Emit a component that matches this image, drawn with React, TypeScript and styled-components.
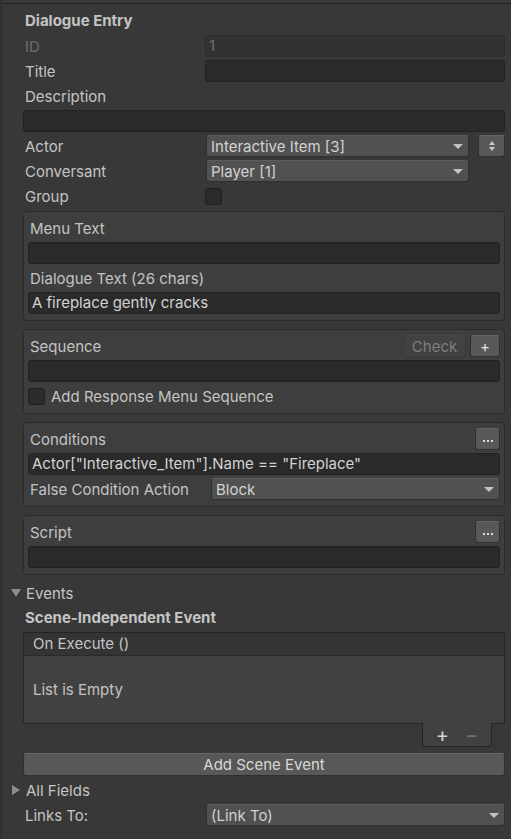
import styled, { createGlobalStyle } from "styled-components";

const GlobalStyle = createGlobalStyle`
  html, body {
    margin: 0;
    background: #383838;
  }
  body {
    font-family: Inter, "Noto Sans", sans-serif;
    font-size: 15px;
    color: #c4c4c4;
  }
`;

const Inspector = styled.div`
  width: 511px;
  height: 839px;
  box-sizing: border-box;
  background: #383838;
  border-left: 2px solid #303030;
  overflow: hidden;
`;

const TopRule = styled.div`
  height: 3px;
  border-bottom: 1px solid #232323;
`;

const Content = styled.div`
  padding: 6px 6px 0 21px;
  display: flex;
  flex-direction: column;
  gap: 3px;
`;

const Row = styled.div`
  display: flex;
  align-items: center;
  height: 22px;
  gap: 4px;
`;

const Heading = styled.div`
  height: 22px;
  line-height: 22px;
  padding-left: 2px;
  font-weight: 700;
`;

const Label = styled.div<{ $w?: number; $dim?: boolean }>`
  width: ${(p) => (p.$w ? `${p.$w - 4}px` : "auto")};
  flex-shrink: 0;
  padding-left: 2px;
  box-sizing: border-box;
  color: ${(p) => (p.$dim ? "#6c6c6c" : "#c4c4c4")};
  white-space: nowrap;
`;

const Field = styled.div<{ $disabled?: boolean }>`
  flex: 1;
  height: 22px;
  box-sizing: border-box;
  background: ${(p) => (p.$disabled ? "#323232" : "#2a2a2a")};
  border: 1px solid ${(p) => (p.$disabled ? "#2c2c2c" : "#212121")};
  border-radius: 3px;
  padding-left: 3px;
  line-height: 20px;
  color: ${(p) => (p.$disabled ? "#6c6c6c" : "#d2d2d2")};
  white-space: nowrap;
  overflow: hidden;
`;

const Popup = styled.div<{ $w?: number }>`
  ${(p) => (p.$w ? `width: ${p.$w}px; flex-shrink: 0;` : "flex: 1;")}
  height: 22px;
  box-sizing: border-box;
  background: #515151;
  border: 1px solid #303030;
  border-top-color: #5d5d5d;
  border-radius: 3px;
  padding: 0 5px 0 4px;
  display: flex;
  align-items: center;
  justify-content: space-between;
  color: #d2d2d2;
  white-space: nowrap;
  &::after {
    content: "";
    border-left: 5px solid transparent;
    border-right: 5px solid transparent;
    border-top: 5px solid #c4c4c4;
  }
`;

const Spacer = styled.div<{ $w: number }>`
  width: ${(p) => p.$w}px;
  flex-shrink: 0;
`;

const StepButton = styled.div`
  width: 27px;
  height: 22px;
  margin-left: 5px;
  box-sizing: border-box;
  background: #585858;
  border: 1px solid #303030;
  border-top-color: #656565;
  border-radius: 3px;
  display: flex;
  align-items: center;
  justify-content: center;
`;

const Checkbox = styled.div`
  width: 17px;
  height: 17px;
  box-sizing: border-box;
  background: #2b2b2b;
  border: 1px solid #1f1f1f;
  border-radius: 3px;
  flex-shrink: 0;
`;

const Box = styled.div`
  margin: 1px 0 4px;
  background: #3e3e3e;
  border: 1px solid #2b2b2b;
  border-radius: 4px;
  padding: 5px 4px 6px;
  display: flex;
  flex-direction: column;
  gap: 3px;
`;

const Grow = styled.div`
  flex: 1;
`;

const SmallButton = styled.div<{ $w: number; $disabled?: boolean }>`
  width: ${(p) => p.$w}px;
  height: 22px;
  box-sizing: border-box;
  border-radius: 3px;
  background: ${(p) => (p.$disabled ? "#424242" : "#585858")};
  border: 1px solid ${(p) => (p.$disabled ? "#3a3a3a" : "#303030")};
  border-top-color: ${(p) => (p.$disabled ? "#464646" : "#656565")};
  color: ${(p) => (p.$disabled ? "#7e7e7e" : "#e4e4e4")};
  display: flex;
  align-items: center;
  justify-content: center;
  flex-shrink: 0;
  line-height: 1;
`;

const Foldout = styled.div<{ $open?: boolean }>`
  height: 22px;
  display: flex;
  align-items: center;
  margin-left: -13px;
  gap: 5px;
  &::before {
    content: "";
    width: 0;
    height: 0;
    ${(p) =>
      p.$open
        ? `border-left: 5px solid transparent; border-right: 5px solid transparent; border-top: 8px solid #8c8c8c; margin-left: 1px;`
        : `border-top: 5px solid transparent; border-bottom: 5px solid transparent; border-left: 8px solid #8c8c8c; margin-left: 2px; margin-right: 1px;`}
  }
`;

const List = styled.div`
  display: flex;
  flex-direction: column;
  align-items: flex-end;
`;

const ListHeader = styled.div`
  align-self: stretch;
  height: 24px;
  box-sizing: border-box;
  background: #343434;
  border: 1px solid #242424;
  border-bottom-color: #2a2a2a;
  border-radius: 3px 3px 0 0;
  padding-left: 9px;
  line-height: 22px;
`;

const ListBody = styled.div`
  align-self: stretch;
  height: 68px;
  box-sizing: border-box;
  background: #414141;
  border: 1px solid #242424;
  border-top: none;
  border-radius: 0 0 3px 3px;
  padding-left: 9px;
  display: flex;
  align-items: center;
`;

const ListFooter = styled.div`
  width: 70px;
  height: 24px;
  margin-right: 13px;
  margin-top: -1px;
  box-sizing: border-box;
  background: #414141;
  border: 1px solid #242424;
  border-top: none;
  border-radius: 0 0 4px 4px;
  display: flex;
  align-items: center;
  justify-content: center;
  gap: 16px;
  font-size: 20px;
`;

const FooterGlyph = styled.span<{ $dim?: boolean }>`
  color: ${(p) => (p.$dim ? "#707070" : "#d6d6d6")};
  line-height: 1;
`;

const WideButton = styled.div`
  margin-top: 3px;
  height: 23px;
  box-sizing: border-box;
  background: #585858;
  border: 1px solid #303030;
  border-top-color: #656565;
  border-radius: 3px;
  display: flex;
  align-items: center;
  justify-content: center;
  color: #d8d8d8;
`;

function Dots() {
  return (
    <svg width="10" height="3" viewBox="0 0 10 3" style={{ marginTop: 5 }}>
      <rect x="0" y="0" width="2" height="2" fill="#d8d8d8" />
      <rect x="4" y="0" width="2" height="2" fill="#d8d8d8" />
      <rect x="8" y="0" width="2" height="2" fill="#d8d8d8" />
    </svg>
  );
}

function UpDown() {
  return (
    <svg width="8" height="12" viewBox="0 0 8 12">
      <path d="M4 1 L7 5 L1 5 Z" fill="#c8c8c8" />
      <path d="M1 7 L7 7 L4 11 Z" fill="#c8c8c8" />
    </svg>
  );
}

export default function App() {
  return (
    <Inspector>
      <GlobalStyle />
      <TopRule />
      <Content>
        <Heading>Dialogue Entry</Heading>
        <Row>
          <Label $w={182} $dim>
            ID
          </Label>
          <Field $disabled>1</Field>
        </Row>
        <Row>
          <Label $w={182}>Title</Label>
          <Field />
        </Row>
        <Row>
          <Label>Description</Label>
        </Row>
        <Row>
          <Field />
        </Row>
        <Row>
          <Label $w={183}>Actor</Label>
          <Popup $w={263}>Interactive Item [3]</Popup>
          <StepButton>
            <UpDown />
          </StepButton>
        </Row>
        <Row>
          <Label $w={183}>Conversant</Label>
          <Popup $w={263}>Player [1]</Popup>
          <Spacer $w={32} />
        </Row>
        <Row>
          <Label $w={182}>Group</Label>
          <Checkbox />
        </Row>

        <Box>
          <Row>
            <Label>Menu Text</Label>
          </Row>
          <Row>
            <Field />
          </Row>
          <Row>
            <Label>Dialogue Text (26 chars)</Label>
          </Row>
          <Row>
            <Field>A fireplace gently cracks</Field>
          </Row>
        </Box>

        <Box>
          <Row>
            <Label>Sequence</Label>
            <Grow />
            <SmallButton $w={63} $disabled>
              Check
            </SmallButton>
            <SmallButton $w={30}>+</SmallButton>
          </Row>
          <Row>
            <Field />
          </Row>
          <Row>
            <Checkbox />
            <Label>Add Response Menu Sequence</Label>
          </Row>
        </Box>

        <Box>
          <Row>
            <Label>Conditions</Label>
            <Grow />
            <SmallButton $w={25}>
              <Dots />
            </SmallButton>
          </Row>
          <Row>
            <Field>Actor["Interactive_Item"].Name == "Fireplace"</Field>
          </Row>
          <Row>
            <Label $w={183}>False Condition Action</Label>
            <Popup>Block</Popup>
          </Row>
        </Box>

        <Box>
          <Row>
            <Label>Script</Label>
            <Grow />
            <SmallButton $w={25}>
              <Dots />
            </SmallButton>
          </Row>
          <Row>
            <Field />
          </Row>
        </Box>

        <Foldout $open>Events</Foldout>
        <Heading>Scene-Independent Event</Heading>
        <List>
          <ListHeader>On Execute ()</ListHeader>
          <ListBody>List is Empty</ListBody>
          <ListFooter>
            <FooterGlyph>+</FooterGlyph>
            <FooterGlyph $dim>−</FooterGlyph>
          </ListFooter>
        </List>
        <WideButton>Add Scene Event</WideButton>
        <Foldout>All Fields</Foldout>
        <Row>
          <Label $w={183}>Links To:</Label>
          <Popup>(Link To)</Popup>
        </Row>
      </Content>
    </Inspector>
  );
}
